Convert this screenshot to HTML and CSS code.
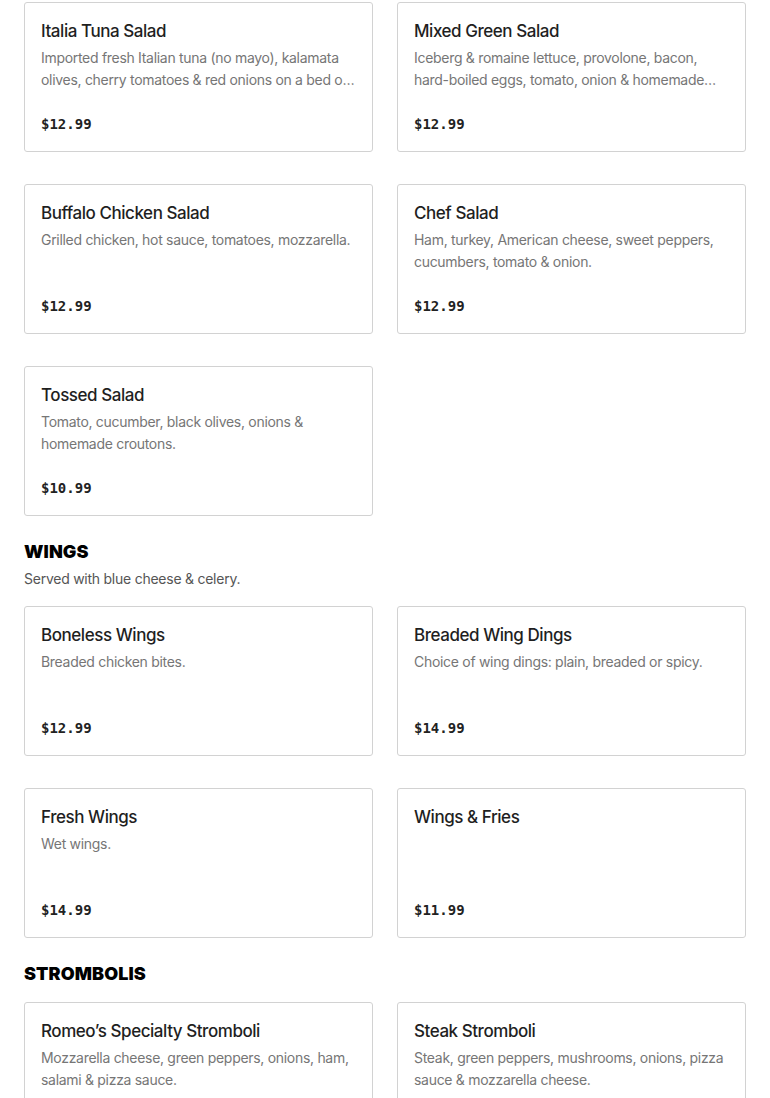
FILE: index.html
```html
<!DOCTYPE html>
<html lang="en">
<head>
<meta charset="utf-8">
<title>Menu</title>
<link rel="stylesheet" href="styles.css">
</head>
<body>
<main class="menu">
  <section class="section first">
    <div class="grid">
      <article class="card">
        <h3 class="card-title">Italia Tuna Salad</h3>
        <p class="card-desc">Imported fresh Italian tuna (no mayo), kalamata olives, cherry tomatoes &amp; red onions on a bed of mixed greens.</p>
        <div class="card-price">$12.99</div>
      </article>
      <article class="card">
        <h3 class="card-title">Mixed Green Salad</h3>
        <p class="card-desc">Iceberg &amp; romaine lettuce, provolone, bacon, hard-boiled eggs, tomato, onion &amp; homemade croutons.</p>
        <div class="card-price">$12.99</div>
      </article>
      <article class="card">
        <h3 class="card-title">Buffalo Chicken Salad</h3>
        <p class="card-desc">Grilled chicken, hot sauce, tomatoes, mozzarella.</p>
        <div class="card-price">$12.99</div>
      </article>
      <article class="card">
        <h3 class="card-title">Chef Salad</h3>
        <p class="card-desc">Ham, turkey, American cheese, sweet peppers, cucumbers, tomato &amp; onion.</p>
        <div class="card-price">$12.99</div>
      </article>
      <article class="card">
        <h3 class="card-title">Tossed Salad</h3>
        <p class="card-desc">Tomato, cucumber, black olives, onions &amp; homemade croutons.</p>
        <div class="card-price">$10.99</div>
      </article>
    </div>
  </section>

  <section class="section">
    <header class="section-head">
      <h2 class="section-title">WINGS</h2>
      <p class="section-sub">Served with blue cheese &amp; celery.</p>
    </header>
    <div class="grid">
      <article class="card">
        <h3 class="card-title">Boneless Wings</h3>
        <p class="card-desc">Breaded chicken bites.</p>
        <div class="card-price">$12.99</div>
      </article>
      <article class="card">
        <h3 class="card-title">Breaded Wing Dings</h3>
        <p class="card-desc">Choice of wing dings: plain, breaded or spicy.</p>
        <div class="card-price">$14.99</div>
      </article>
      <article class="card">
        <h3 class="card-title">Fresh Wings</h3>
        <p class="card-desc">Wet wings.</p>
        <div class="card-price">$14.99</div>
      </article>
      <article class="card">
        <h3 class="card-title">Wings &amp; Fries</h3>
        <p class="card-desc"></p>
        <div class="card-price">$11.99</div>
      </article>
    </div>
  </section>

  <section class="section">
    <header class="section-head">
      <h2 class="section-title">STROMBOLIS</h2>
    </header>
    <div class="grid">
      <article class="card">
        <h3 class="card-title">Romeo’s Specialty Stromboli</h3>
        <p class="card-desc">Mozzarella cheese, green peppers, onions, ham, salami &amp; pizza sauce.</p>
        <div class="card-price">$12.99</div>
      </article>
      <article class="card">
        <h3 class="card-title">Steak Stromboli</h3>
        <p class="card-desc">Steak, green peppers, mushrooms, onions, pizza sauce &amp; mozzarella cheese.</p>
        <div class="card-price">$12.99</div>
      </article>
    </div>
  </section>
</main>
</body>
</html>
```

FILE: styles.css
```css
* { box-sizing: border-box; }
html, body { margin: 0; padding: 0; background: #fff; }
body {
  font-family: Inter, "Noto Sans", "Liberation Sans", sans-serif;
  color: #222;
}
.menu { padding: 2px 24px 40px; }
.section { margin-top: 24px; }
.section.first { margin-top: 0; }
.section-head { margin-bottom: 16px; }
.section-title {
  margin: 0;
  font-size: 18px;
  line-height: 24px;
  font-weight: 900;
  color: #000;
  letter-spacing: 0.1px;
}
.section-sub {
  margin: 4px 0 0;
  font-size: 14px;
  line-height: 22px;
  color: #555;
  letter-spacing: -0.25px;
}
.grid {
  display: grid;
  grid-template-columns: 1fr 1fr;
  column-gap: 24px;
  row-gap: 32px;
}
.card {
  height: 150px;
  border: 1px solid #d2d2d2;
  border-radius: 3px;
  padding: 16px 16px 15px;
  display: flex;
  flex-direction: column;
  background: #fff;
}
.card-title {
  margin: 0;
  font-size: 17px;
  line-height: 24px;
  font-weight: 500;
  color: #1f1f1f;
  letter-spacing: -0.45px;
}
.card-desc {
  margin: 4px 0 0;
  font-size: 14px;
  line-height: 22px;
  color: #767676;
  letter-spacing: -0.3px;
  display: -webkit-box;
  -webkit-line-clamp: 2;
  -webkit-box-orient: vertical;
  overflow: hidden;
}
.card-price {
  margin-top: auto;
  font-family: "DejaVu Sans Mono", "Liberation Mono", monospace;
  font-weight: 700;
  font-size: 14px;
  line-height: 24px;
  color: #222;
}
```
